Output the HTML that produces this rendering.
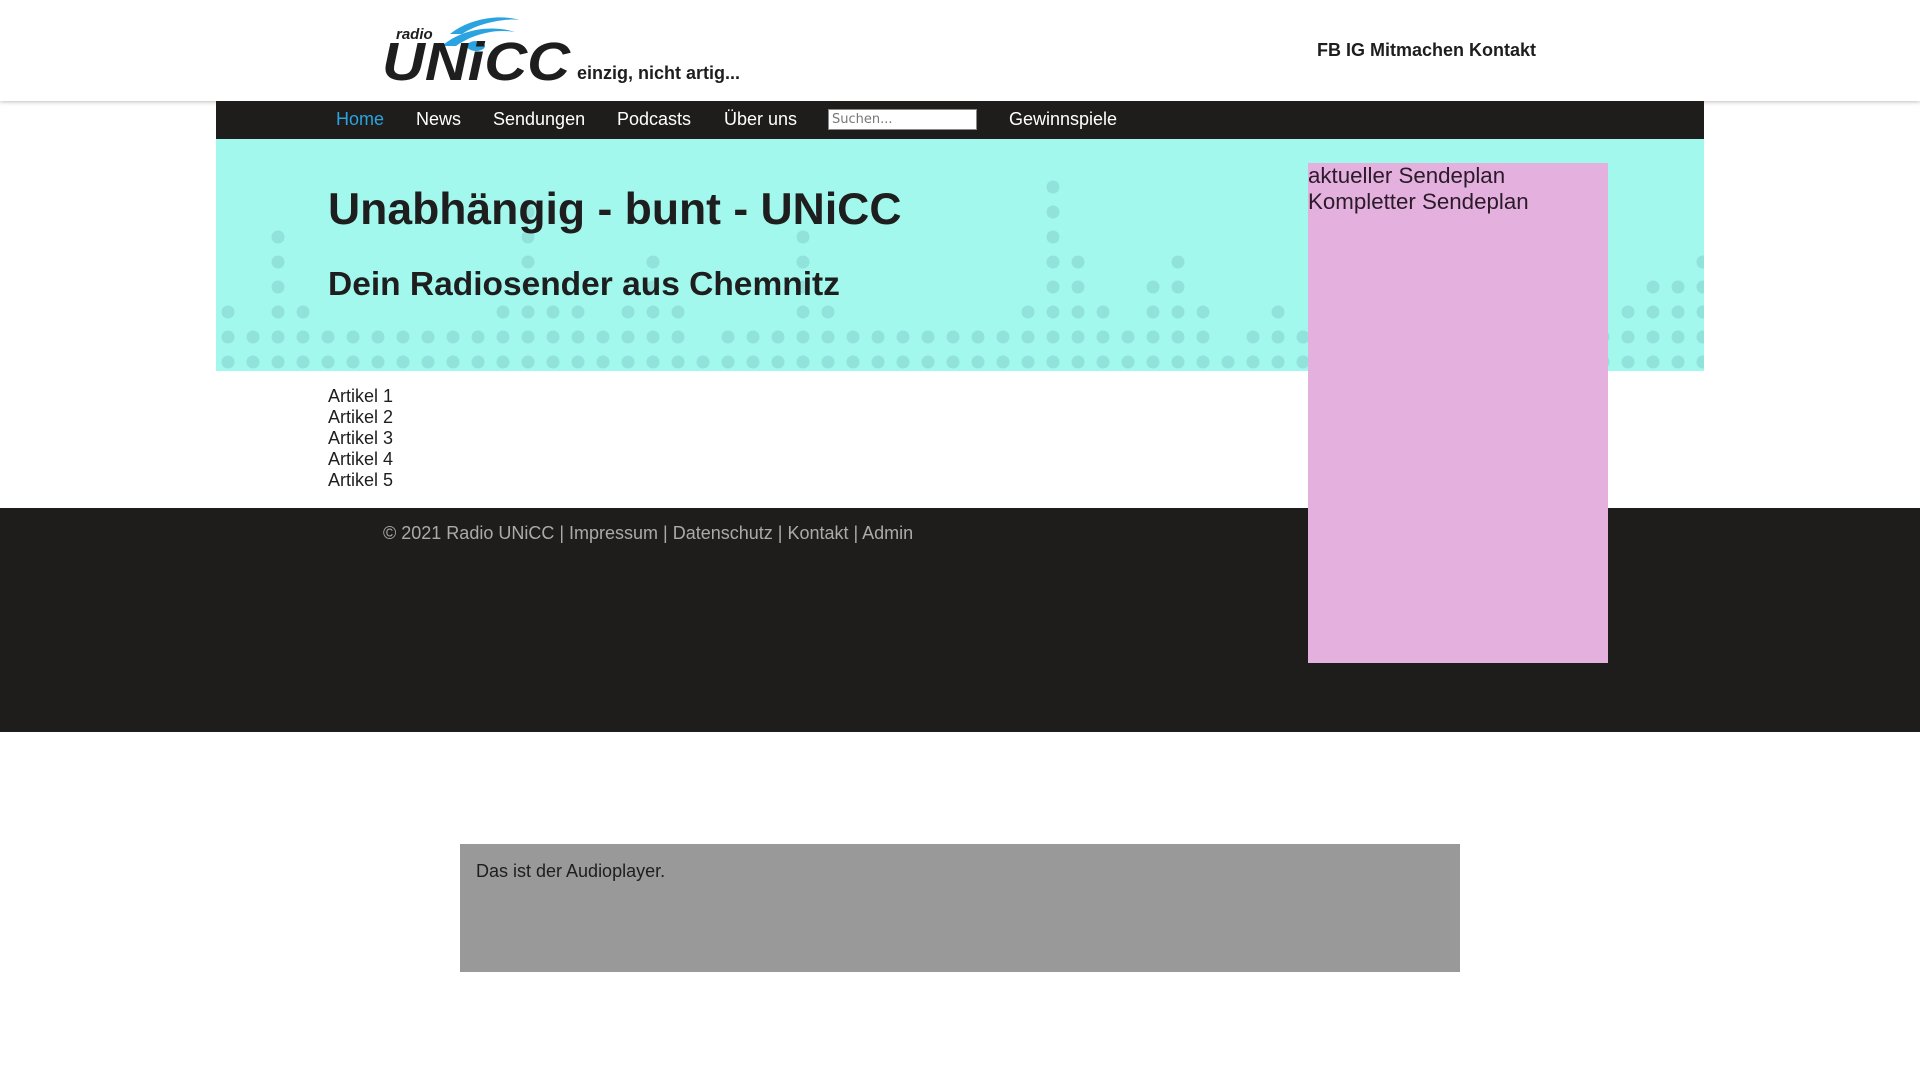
<!DOCTYPE html>
<html><head><meta charset="utf-8"><style>
*{margin:0;padding:0;box-sizing:border-box}
body{width:1920px;height:1080px;background:#fff;font-family:"Liberation Sans",Arial,sans-serif;position:relative;overflow:hidden;color:#1e1e1e}
.hdr{position:absolute;left:0;top:0;width:1920px;height:101px;background:#fff;box-shadow:0 1px 4px rgba(0,0,0,.25);z-index:2}
.tag{position:absolute;left:577px;top:63px;font-size:18px;font-weight:bold;color:#1e1e1e}
.tr{position:absolute;left:1317px;top:40px;font-size:18px;font-weight:bold;color:#1e1e1e}
.nav{position:absolute;left:216px;top:101px;width:1488px;height:38px;background:#1e1d1c;z-index:3}
.nav span{position:absolute;top:8px;font-size:18px;color:#fff}
.nav input{position:absolute;left:612px;top:8px;width:149px;height:21px;border:1px solid #888;font-size:13px;padding-left:3px;font-family:"DejaVu Sans",sans-serif;color:#777}
.hero{position:absolute;left:216px;top:139px;width:1488px;height:232px;background:#a3f8ee}
h1{position:absolute;left:328px;top:185px;font-size:44.5px;font-weight:bold;color:#1e1e1e}
h2{position:absolute;left:328px;top:266px;font-size:33.5px;font-weight:bold;color:#1e1e1e}
.side{position:absolute;left:1308px;top:163px;width:300px;height:500px;background:#e4b1de;font-size:22.3px;line-height:26px;color:#2a1a2a;z-index:4}
.art{position:absolute;left:328px;top:386px;font-size:18px;line-height:21px}
.foot{position:absolute;left:0;top:508px;width:1920px;height:224px;background:#1e1d1c}
.foot span{position:absolute;left:383px;top:15px;font-size:18px;color:#aaa}
.player{position:absolute;left:460px;top:844px;width:1000px;height:128px;background:#999}
.player span{position:absolute;left:16px;top:17px;font-size:18px;color:#1e1e1e}
</style></head><body>
<div class="hdr">
<svg style="position:absolute;left:380px;top:12px" width="200" height="74" viewBox="0 0 200 74">
<path d="M70 22 C90 6 120 2 140 8 C128 6 100 10 82 22 Z" fill="#2aa3e0"/>
<path d="M62 34 C80 18 110 12 135 20 C112 16 90 24 76 34 Z" fill="#2aa3e0"/>
<ellipse cx="96" cy="34" rx="9" ry="5" fill="#2aa3e0"/>
<text x="16" y="27" font-size="15" font-style="italic" font-weight="bold" fill="#1e1e1e" font-family="Liberation Sans">radio</text>
<text x="2" y="68" font-size="54" font-style="italic" font-weight="bold" fill="#1e1e1e" font-family="Liberation Sans" textLength="188" lengthAdjust="spacingAndGlyphs">UNiCC</text>
</svg>
<div class="tag">einzig, nicht artig...</div>
<div class="tr">FB IG Mitmachen Kontakt</div>
</div>
<div class="nav">
<span style="left:120px;color:#2aa3e0">Home</span>
<span style="left:200px">News</span>
<span style="left:277px">Sendungen</span>
<span style="left:401px">Podcasts</span>
<span style="left:508px">Über uns</span>
<input value="Suchen...">
<span style="left:793px">Gewinnspiele</span>
</div>
<div class="hero">
<svg width="1488" height="232" style="position:absolute;left:0;top:0" id="dots">
<g fill="#90e2da"></g></svg>
</div>
<h1>Unabhängig - bunt - UNiCC</h1>
<h2>Dein Radiosender aus Chemnitz</h2>
<div class="side">aktueller Sendeplan<br>Kompletter Sendeplan</div>
<div class="art">Artikel 1<br>Artikel 2<br>Artikel 3<br>Artikel 4<br>Artikel 5</div>
<div class="foot"><span>© 2021 Radio UNiCC | Impressum | Datenschutz | Kontakt | Admin</span></div>
<div class="player"><span>Das ist der Audioplayer.</span></div>
<script>
var h={0:3,2:6,3:3,11:3,12:7,13:3,14:3,16:3,17:5,18:3,19:1,23:6,24:3,32:3,33:8,34:5,35:3,37:4,38:5,39:3,40:1,42:3,56:3,57:4,58:4,59:5};
var g=document.querySelector('#dots g'),s='';
for(var k=0;k<60;k++){var n=h[k]||2;for(var r=0;r<n;r++){s+='<circle cx="'+(12+25*k)+'" cy="'+(223-25*r)+'" r="6.5"/>';}}
g.innerHTML=s;
</script>
</body></html>
